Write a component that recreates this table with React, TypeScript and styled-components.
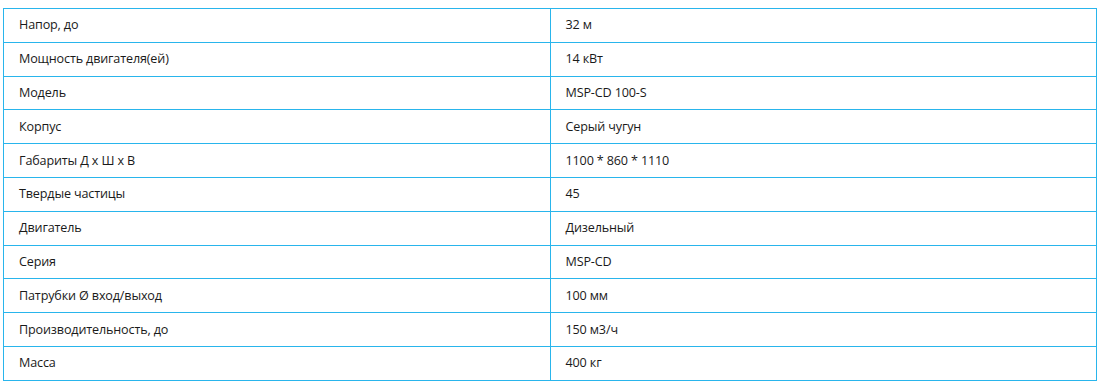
import React from "react";
import styled, { createGlobalStyle } from "styled-components";

const GlobalStyle = createGlobalStyle`
  body {
    margin: 0;
    padding: 8px 5px 0 3px;
    background: #fff;
    font-family: "Open Sans", "Noto Sans", sans-serif;
  }
`;

const BORDER = "#29b5ec";

const SpecTable = styled.table`
  width: 100%;
  border-collapse: collapse;
  border: 1px solid ${BORDER};
  table-layout: fixed;
`;

const HalfColumn = styled.col`
  width: 50%;
`;

const Row = styled.tr`
  height: 33.8px;
`;

const Cell = styled.td`
  border: 1px solid ${BORDER};
  padding: 0 15px;
  font-size: 12.6px;
  letter-spacing: -0.15px;
  color: #1a1a1a;
  vertical-align: middle;
  line-height: 16px;
`;

const specs: [string, string][] = [
  ["Напор, до", "32 м"],
  ["Мощность двигателя(ей)", "14 кВт"],
  ["Модель", "MSP-CD 100-S"],
  ["Корпус", "Серый чугун"],
  ["Габариты Д х Ш х В", "1100 * 860 * 1110"],
  ["Твердые частицы", "45"],
  ["Двигатель", "Дизельный"],
  ["Серия", "MSP-CD"],
  ["Патрубки Ø вход/выход", "100 мм"],
  ["Производительность, до", "150 м3/ч"],
  ["Масса", "400 кг"],
];

export default function App() {
  return (
    <>
      <GlobalStyle />
      <SpecTable>
        <colgroup>
          <HalfColumn />
          <HalfColumn />
        </colgroup>
        <tbody>
          {specs.map(([label, value]) => (
            <Row key={label}>
              <Cell>{label}</Cell>
              <Cell>{value}</Cell>
            </Row>
          ))}
        </tbody>
      </SpecTable>
    </>
  );
}
